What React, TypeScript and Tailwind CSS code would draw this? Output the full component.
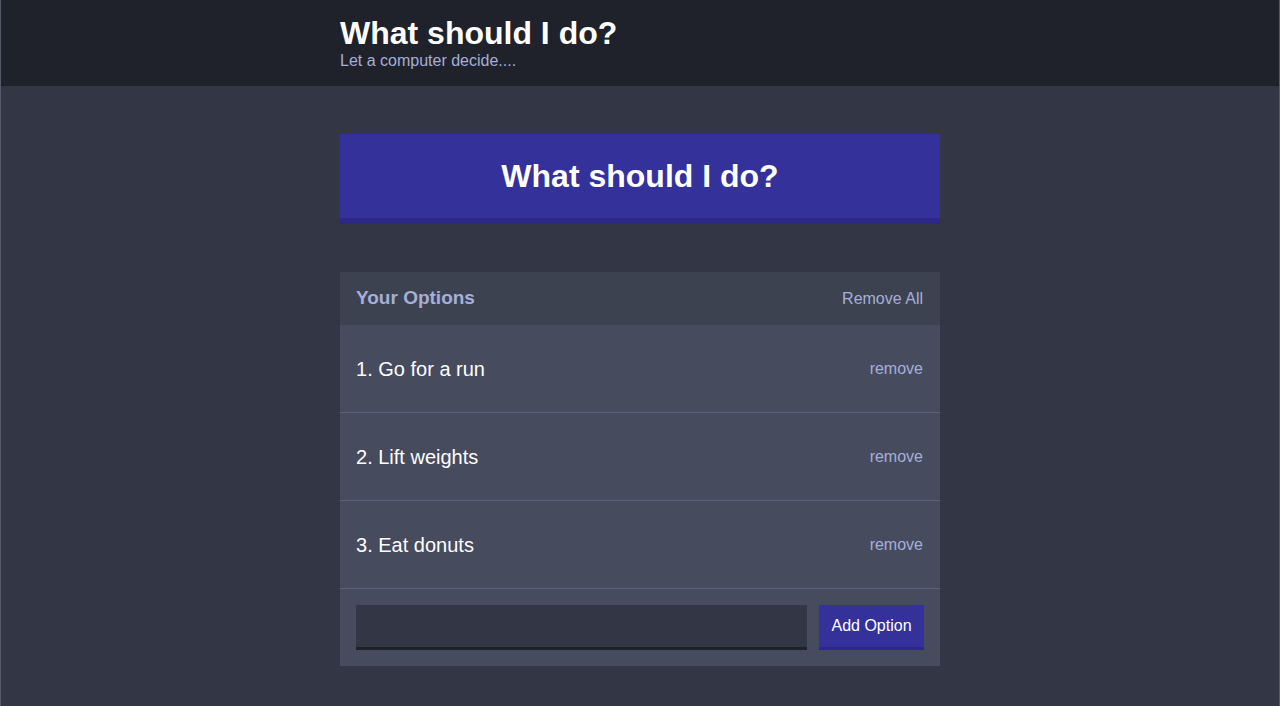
import React, { useState } from "react";

export default function App() {
  const [options, setOptions] = useState<string[]>(["Go for a run", "Lift weights", "Eat donuts"]);
  const [text, setText] = useState("");

  const addOption = () => {
    if (!text.trim()) return;
    setOptions((prev) => [...prev, text.trim()]);
    setText("");
  };

  return (
    <div
      className="min-h-[706px] w-full bg-[#333745] border-x border-[#555a6a]"
      style={{ fontFamily: '"Liberation Sans", Arial, sans-serif' }}
    >
      {/* header */}
      <header className="h-[86px] bg-[#20222b]">
        <div className="w-[600px] mx-auto pt-[14px]">
          <h1 className="text-[32px] leading-[38px] font-bold text-white">What should I do?</h1>
          <p className="text-[16px] leading-[18px] text-[#a5afd7]">Let a computer decide....</p>
        </div>
      </header>

      <div className="w-[600px] mx-auto pt-[48px]">
        <button className="w-full h-[90px] bg-[#34319b] border-b-[6px] border-[#2c2886] text-white text-[32px] font-bold">
          What should I do?
        </button>

        <div className="mt-[48px] bg-[#464b5e]">
          <div className="h-[53px] bg-[#3d4251] flex items-center justify-between pl-4 pr-[17px]">
            <h3 className="text-[19px] font-bold text-[#a5afd7]">Your Options</h3>
            <button onClick={() => setOptions([])} className="text-[16px] text-[#a5afd7]">
              Remove All
            </button>
          </div>

          {options.map((opt, i) => (
            <div key={opt + i} className="h-[88px] flex items-center justify-between pl-4 pr-[17px] border-b border-[#5d6276]">
              <p className="text-[20px] text-white">
                {i + 1}. {opt}
              </p>
              <button
                onClick={() => setOptions((prev) => prev.filter((_, j) => j !== i))}
                className="text-[16px] text-[#a5afd7]"
              >
                remove
              </button>
            </div>
          ))}

          <div className="flex items-stretch gap-3 p-4">
            <input
              value={text}
              onChange={(e) => setText(e.target.value)}
              onKeyDown={(e) => e.key === "Enter" && addOption()}
              className="flex-1 h-[45px] bg-[#333745] border-b-[3px] border-[#20222b] text-white px-2 outline-none"
            />
            <button
              onClick={addOption}
              className="w-[105px] h-[45px] bg-[#34319b] border-b-[3px] border-[#2c2886] text-white text-[16px]"
            >
              Add Option
            </button>
          </div>
        </div>
      </div>
    </div>
  );
}
